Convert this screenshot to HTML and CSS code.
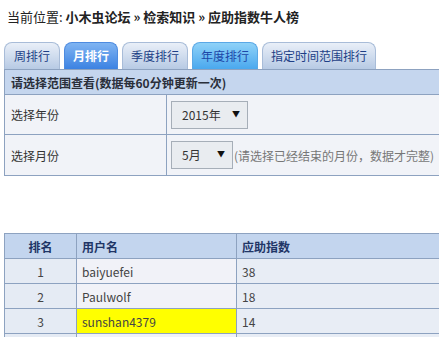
FILE: index.html
```html
<!DOCTYPE html>
<html lang="zh-CN">
<head>
  <meta charset="UTF-8">
  <title>应助指数牛人榜</title>
  <link rel="stylesheet" href="styles.css">
</head>
<body>
  <div class="crumb">当前位置: <b>小木虫论坛</b> <b>»</b> <b>检索知识</b> <b>»</b> <b>应助指数牛人榜</b></div>
  <div class="tabs">
    <a class="tab">周排行</a>
    <a class="tab active">月排行</a>
    <a class="tab">季度排行</a>
    <a class="tab hover">年度排行</a>
    <a class="tab">指定时间范围排行</a>
  </div>
  <table class="form">
    <tr><th colspan="2">请选择范围查看(数据每60分钟更新一次)</th></tr>
    <tr class="r1">
      <td class="label">选择年份</td>
      <td><span class="sel w1">2015年<i>▼</i></span></td>
    </tr>
    <tr class="r2">
      <td class="label">选择月份</td>
      <td><span class="sel w2">5月<i>▼</i></span><span class="note">(请选择已经结束的月份，数据才完整)</span></td>
    </tr>
  </table>
  <table class="rank">
    <tr><th class="c1">排名</th><th class="c2">用户名</th><th>应助指数</th></tr>
    <tr><td class="c1">1</td><td class="c2">baiyuefei</td><td>38</td></tr>
    <tr><td class="c1">2</td><td class="c2">Paulwolf</td><td>18</td></tr>
    <tr><td class="c1">3</td><td class="c2 me">sunshan4379</td><td>14</td></tr>
    <tr><td class="c1"></td><td class="c2"></td><td></td></tr>
  </table>
</body>
</html>
```

FILE: styles.css
```css
html, body {
  overflow: hidden;
}
body {
  margin: 0;
  padding: 0 0 0 4px;
  width: 480px;
  font-family: "Noto Sans CJK SC", "Noto Sans", sans-serif;
  font-size: 12px;
  color: #333;
  background: #fff;
}
.crumb {
  padding: 8px 0 0 3px;
  font-size: 13px;
  line-height: 18px;
  height: 18px;
  color: #222;
}
.tabs {
  display: flex;
  gap: 4px;
  margin-top: 16px;
  height: 27px;
}
.tab {
  display: block;
  padding: 0 8px;
  line-height: 26px;
  font-size: 12px;
  border: 1px solid #a8bcd8;
  border-bottom: none;
  border-radius: 8px 8px 0 0;
  background: linear-gradient(#e9eff8, #b7cae4);
  color: #1d3f86;
}
.tab:first-child {
  padding: 0 9px;
}
.tab.active {
  padding: 0 8px;
  background: linear-gradient(#7fb4f2, #3c82e2);
  border-color: #4d8be0;
  color: #fff;
  font-weight: bold;
}
.tab.hover {
  background: linear-gradient(#8fd2f8, #4aa8ee);
  border-color: #5aa8e6;
  color: #1d47a8;
}
table {
  border-collapse: collapse;
  width: 476px;
}
.form th {
  height: 24px;
  padding: 0 0 0 6px;
  text-align: left;
  background: #c5d6ee;
  border: 1px solid #8da2c0;
  color: #2a2f3a;
  font-weight: bold;
}
.form td {
  background: #f1f3f8;
  border: 1px solid #8da2c0;
  padding: 0 0 0 4px;
}
.form .r1 td { height: 39px; }
.form .r2 td { height: 40px; }
.form td.label {
  width: 155px;
  padding-left: 6px;
}
.sel {
  display: inline-block;
  box-sizing: border-box;
  height: 28px;
  line-height: 26px;
  padding-left: 10px;
  border: 1px solid #a6aeb8;
  background: #e9ecf0;
  color: #333;
  vertical-align: middle;
  position: relative;
}
.sel i {
  position: absolute;
  right: 7px;
  top: -1px;
  font-style: normal;
  font-size: 8px;
  color: #111;
}
.w1 { width: 77px; }
.w2 { width: 62px; }
.note {
  color: #777;
  vertical-align: middle;
  margin-left: 1px;
}
.rank {
  margin-top: 57px;
}
.rank th, .rank td {
  height: 24px;
  padding: 0 0 0 5px;
  border: 1px solid #8da2c0;
  text-align: left;
}
.rank th {
  background: #c3d5ee;
  color: #1f3566;
  font-weight: bold;
}
.rank td {
  background: #e8edf5;
  color: #444;
}
.rank .c1 {
  width: 71px;
  padding: 0;
  text-align: center;
}
.rank td.c1 {
  background: #e5ebf4;
}
.rank .c2 {
  width: 154px;
}
.rank td.c2 {
  background: #f1f2f8;
}
.rank td.me {
  background: #ffff00;
}
```
